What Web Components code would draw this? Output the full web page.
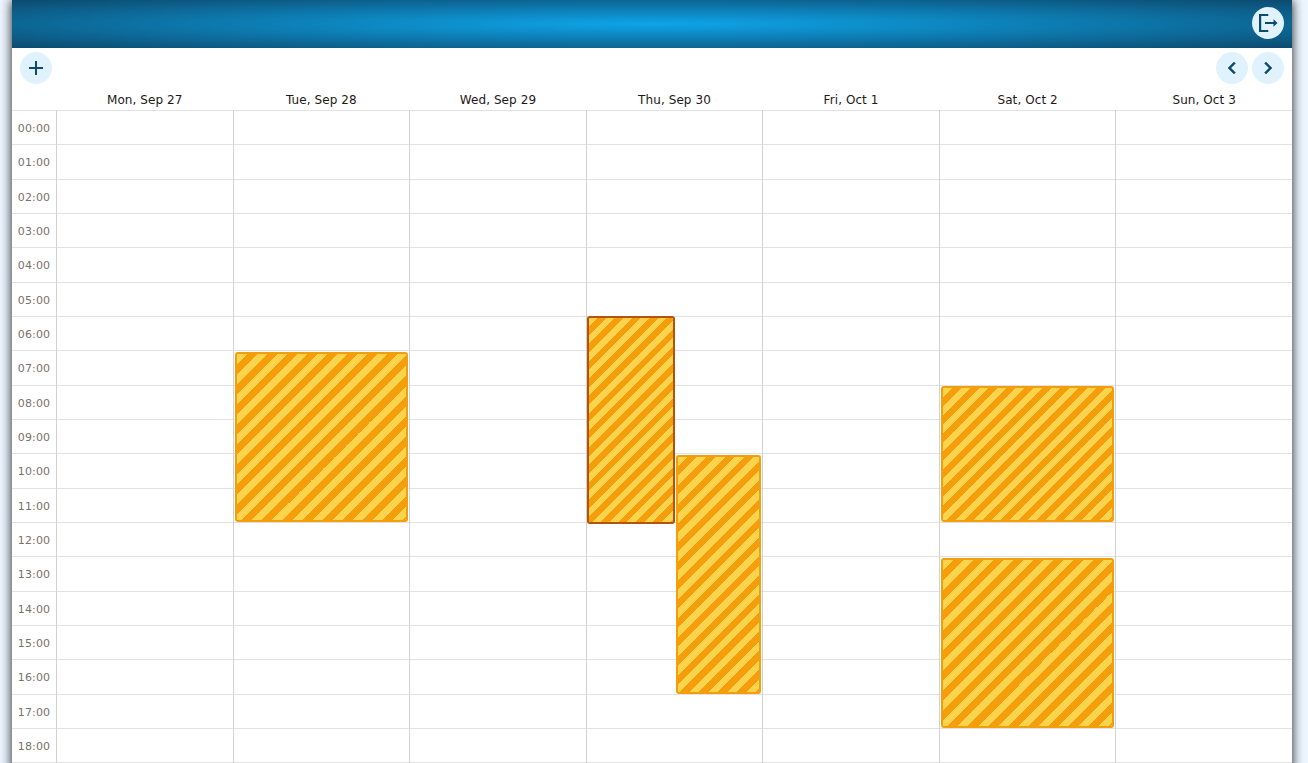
<!DOCTYPE html>
<html lang="en"><head><meta charset="utf-8"><title>Week schedule</title>
<style>body{margin:0;height:763px;overflow:hidden;background:#eef6ff;font-family:Verdana,"DejaVu Sans",sans-serif}</style></head>
<body>
<schedule-app></schedule-app>
<script>
const define=(name,cls)=>customElements.define(name,cls);
const root=(el,html)=>{el.attachShadow({mode:'open'}).innerHTML=html};

define('round-button',class extends HTMLElement{constructor(){super();root(this,`
<style>:host{display:block;width:32px;height:32px}
button{display:flex;align-items:center;justify-content:center;width:32px;height:32px;border:0;padding:0;border-radius:50%;background:#e0f2fe;color:#0c4a6e}</style>
<button><slot></slot></button>`)}});

define('app-header',class extends HTMLElement{constructor(){super();root(this,`
<style>:host{display:flex;height:48px;flex:none;box-sizing:border-box;justify-content:flex-end;align-items:center;padding:0 8px 2px;
background:radial-gradient(ellipse at center,#0ea5e9,#0c4a6e)}</style><slot></slot>`)}});

define('app-toolbar',class extends HTMLElement{constructor(){super();root(this,`
<style>:host{display:flex;height:40px;flex:none;box-sizing:border-box;padding:4px 8px;gap:4px}
.gap{flex:1}</style><slot name="start"></slot><span class="gap"></span><slot></slot>`)}});

define('calendar-event',class extends HTMLElement{connectedCallback(){
const a=n=>+this.getAttribute(n);
root(this,`
<style>:host{position:absolute;z-index:1;box-sizing:border-box;left:${a('left')}px;width:${a('width')}px;top:${a('top')}px;height:${a('height')}px;
border:2px solid #f59e0b;border-radius:3px;
background:repeating-linear-gradient(135deg,#fcd34d 0 3%,#f59e0b 3% 6%) padding-box}
:host([selected]){border-color:#b45309}</style>`)}});

define('day-column',class extends HTMLElement{constructor(){super();root(this,`
<style>:host{display:block;position:relative;box-sizing:border-box;border-left:1px solid #d2d2d2}</style><slot></slot>`)}});

define('week-grid',class extends HTMLElement{constructor(){super();
const days=['Mon, Sep 27','Tue, Sep 28','Wed, Sep 29','Thu, Sep 30','Fri, Oct 1','Sat, Oct 2','Sun, Oct 3'];
const ev={1:'<calendar-event left="1" width="173" top="242" height="170"></calendar-event>',
3:'<calendar-event selected left="0" width="88" top="206" height="208"></calendar-event><calendar-event left="89" width="85" top="345" height="239"></calendar-event>',
5:'<calendar-event left="1" width="173" top="276" height="136"></calendar-event><calendar-event left="1" width="173" top="448" height="170"></calendar-event>'};
root(this,`
<style>:host{display:block}
.head,.body{display:grid;grid-template-columns:44px repeat(7,minmax(0,1fr))}
.head{height:22px;font-size:12px;line-height:24px;letter-spacing:.08px;text-align:center;color:#1c1917}
.head span{padding-left:1px}
.body{height:653px;overflow:hidden}
.time{height:34.333px;box-sizing:border-box;border-top:1px solid #e2e2e2;font-size:11px;line-height:36px;letter-spacing:.12px;text-align:center;color:#78716c}
day-column{height:653px}
.row{height:34.333px;box-sizing:border-box;border-top:1px solid #e2e2e2}
</style>
<div class="head"><span></span>${days.map(d=>`<span>${d}</span>`).join('')}</div>
<div class="body"><div class="times">${Array.from({length:20},(_,i)=>`<div class="time">${i<19?String(i).padStart(2,'0')+':00':''}</div>`).join('')}</div>
${days.map((_,i)=>`<day-column>${'<div class="row"></div>'.repeat(20)}${ev[i]||''}</day-column>`).join('')}</div>`)}});

define('schedule-app',class extends HTMLElement{constructor(){super();root(this,`
<style>:host{display:flex;flex-direction:column;width:1280px;height:800px;margin-left:12px;background:#fff;box-shadow:0 0 11px rgba(0,0,0,.9)}
svg{display:block;width:24px;height:24px;fill:currentColor}
.bold{stroke:currentColor;stroke-width:.5}</style>
<app-header><round-button><svg viewBox="0 0 24 24"><path d="M3 3h9.300v2H5.200v14h7.100v2H3zM9 11h8.500V8.200l4 3.800-4 3.800V13H9z"/></svg></round-button></app-header>
<app-toolbar><round-button slot="start"><svg viewBox="0 0 24 24"><path d="M11 5h2v6h6v2h-6v6h-2v-6H5v-2h6z"/></svg></round-button>
<round-button><svg class="bold" viewBox="0 0 24 24"><path d="M15.410 7.410L14 6l-6 6 6 6 1.410-1.410L10.830 12z"/></svg></round-button>
<round-button><svg class="bold" viewBox="0 0 24 24"><path d="M10 6L8.590 7.410 13.170 12l-4.580 4.590L10 18l6-6z"/></svg></round-button></app-toolbar>
<week-grid></week-grid>`)}});
</script></body></html>
